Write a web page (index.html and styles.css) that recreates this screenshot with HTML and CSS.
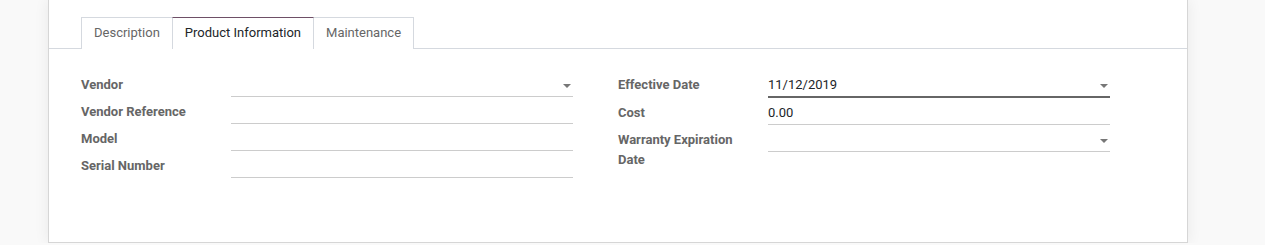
FILE: index.html
```html
<!DOCTYPE html>
<html lang="en">
<head>
  <meta charset="UTF-8">
  <title>Equipment</title>
  <link rel="stylesheet" href="styles.css">
</head>
<body>
  <div class="sheet">
    <!-- Tabs -->
    <ul class="tabs">
      <li class="tab">Description</li>
      <li class="tab active">Product Information</li>
      <li class="tab">Maintenance</li>
    </ul>

    <!-- Product information -->
    <div class="groups">
      <div class="group">
        <div class="label">Vendor</div>
        <div class="field select"></div>
        <div class="label">Vendor Reference</div>
        <div class="field"></div>
        <div class="label">Model</div>
        <div class="field"></div>
        <div class="label">Serial Number</div>
        <div class="field"></div>
      </div>
      <div class="group">
        <div class="label">Effective Date</div>
        <div class="field select focused">11/12/2019</div>
        <div class="label">Cost</div>
        <div class="field">0.00</div>
        <div class="label">Warranty Expiration Date</div>
        <div class="field select"></div>
      </div>
    </div>
  </div>
</body>
</html>
```

FILE: styles.css
```css
body {
  margin: 0;
  background-color: #f9f9f9;
  font-family: Roboto, "Liberation Sans", sans-serif;
  font-size: 13px;
  color: #212529;
}

.sheet {
  width: 1140px;
  height: 243px;
  margin-left: 48px;
  padding: 0 32px;
  box-sizing: border-box;
  background: white;
  border: 1px solid #d6d6d6;
  border-top: none;
  box-shadow: 0 0 14px rgba(0, 0, 0, 0.07);
}

/* Tabs */
.tabs {
  display: flex;
  list-style: none;
  margin: 0 -32px;
  padding: 17px 32px 0;
  border-bottom: 1px solid #d5d9df;
}

.tab {
  padding: 5px 12px 5px;
  line-height: 20px;
  color: #666;
  background: white;
  border: 1px solid #d5d9df;
  border-bottom: none;
  margin-bottom: -1px;
  margin-left: -1px;
}

.tab:first-child { margin-left: 0; }

.tab.active {
  color: #212529;
  border-top-color: #6e4f66;
  padding-bottom: 6px;
  position: relative;
  z-index: 1;
}

/* Groups */
.groups {
  display: flex;
  margin-top: 25px;
}

.group {
  flex: 1;
  display: grid;
  grid-template-columns: 150px 1fr;
  row-gap: 4px;
  padding-right: 45px;
  align-items: start;
  align-content: start;
}

.label {
  font-weight: bold;
  color: #666;
  line-height: 19.5px;
  padding-top: 1px;
  padding-right: 20px;
}

.field {
  position: relative;
  height: 23px;
  line-height: 20px;
  padding-top: 1px;
  box-sizing: border-box;
  border-bottom: 1px solid #ccc;
}

.field.focused {
  border-bottom: 2px solid #666;
  height: 24px;
}

.field.select::after {
  content: "";
  position: absolute;
  right: 2px;
  top: 10px;
  border-top: 4px solid #777;
  border-left: 4px solid transparent;
  border-right: 4px solid transparent;
}
```
